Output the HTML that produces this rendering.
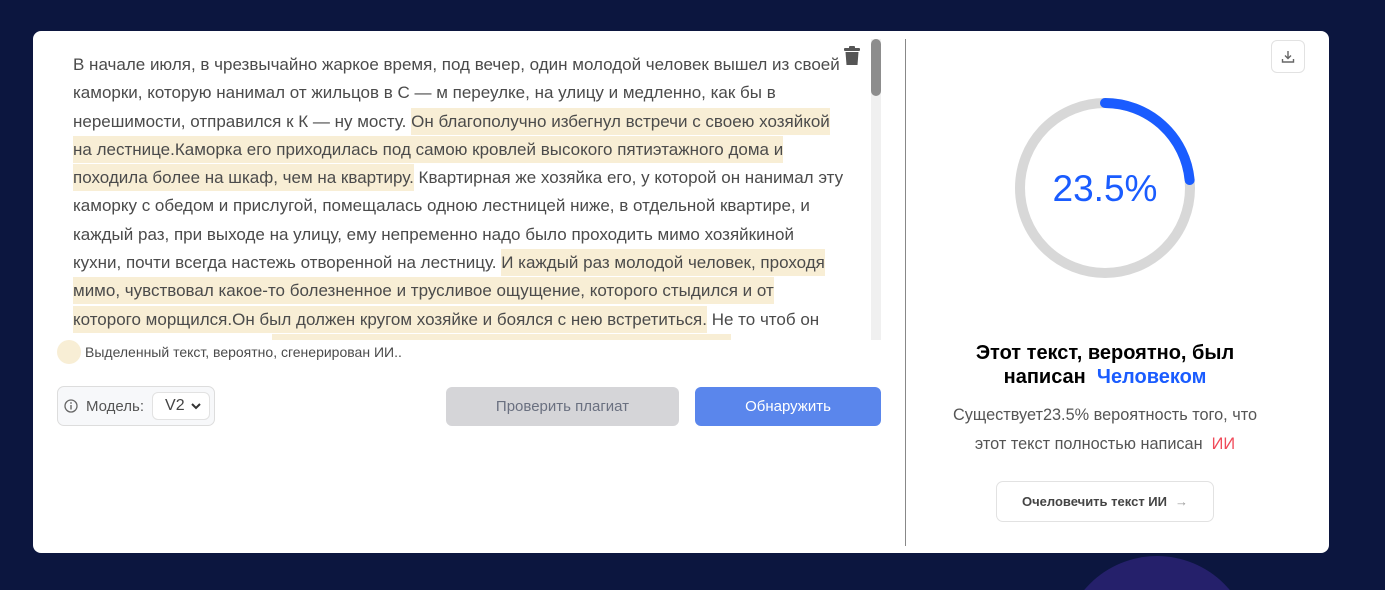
<!DOCTYPE html>
<html><head><meta charset="utf-8"><style>
*{margin:0;padding:0;box-sizing:border-box}
html,body{width:1385px;height:590px;overflow:hidden}
body{background:#0c163f;font-family:"Liberation Sans",sans-serif;position:relative}
.bw{position:absolute;left:1062px;top:556px;width:190px;height:34px;overflow:hidden}
.blob{width:190px;height:190px;border-radius:50%;background:#25206b}
.card{position:absolute;left:33px;top:31px;width:1296px;height:522px;background:#fff;border-radius:8px}
.txt{position:absolute;left:40px;top:20px;width:800px;height:289px;overflow:hidden;font-size:17px;line-height:28.3px;color:#4b4b4b;white-space:nowrap}
.h{background:#f8eed5;padding:4px 0}
.sb{position:absolute;left:838px;top:8px;width:10px;height:301px;background:#f0f0f0}
.sb i{display:block;width:10px;height:57px;background:#8d8d8d;border-radius:5px}
.legend{position:absolute;left:24px;top:309px;font-size:14px;color:#4b4b4b;display:flex;align-items:center}
.legend b{width:24px;height:24px;border-radius:50%;background:#f8eed5;margin-right:4px}
.model{position:absolute;left:24px;top:355px;width:158px;height:40px;border:1px solid #ddd;border-radius:7px;background:#f7f8fa;display:flex;align-items:center;font-size:15px;color:#555}
.sel{margin-left:8px;width:58px;height:28px;border:1px solid #e2e2e2;border-radius:6px;background:#fff;display:flex;align-items:center;justify-content:space-between;padding:0 8px 0 12px;font-size:16px;color:#444}
.btn{position:absolute;top:356px;height:39px;border-radius:6px;display:flex;align-items:center;justify-content:center;font-size:15px}
.div{position:absolute;left:872px;top:8px;width:1px;height:507px;background:#888}
.dl{position:absolute;left:1238px;top:9px;width:34px;height:33px;border:1px solid #e2e2e2;border-radius:6px;display:flex;align-items:center;justify-content:center}
.r{position:absolute;left:873px;width:398px;text-align:center}
</style></head><body>
<div class="bw"><div class="blob"></div></div>
<div class="card">
<div class="txt">В начале июля, в чрезвычайно жаркое время, под вечер, один молодой человек вышел из своей<br>каморки, которую нанимал от жильцов в С — м переулке, на улицу и медленно, как бы в<br>нерешимости, отправился к К — ну мосту. <span class="h">Он благополучно избегнул встречи с своею хозяйкой</span><br><span class="h">на лестнице.Каморка его приходилась под самою кровлей высокого пятиэтажного дома и</span><br><span class="h">походила более на шкаф, чем на квартиру.</span> Квартирная же хозяйка его, у которой он нанимал эту<br>каморку с обедом и прислугой, помещалась одною лестницей ниже, в отдельной квартире, и<br>каждый раз, при выходе на улицу, ему непременно надо было проходить мимо хозяйкиной<br>кухни, почти всегда настежь отворенной на лестницу. <span class="h">И каждый раз молодой человек, проходя</span><br><span class="h">мимо, чувствовал какое-то болезненное и трусливое ощущение, которого стыдился и от</span><br><span class="h">которого морщился.Он был должен кругом хозяйке и боялся с нею встретиться.</span> Не то чтоб он<br>был так труслив и забит, <span class="h">совсем даже напротив; но с некоторого времени он был в</span></div>
<svg style="position:absolute;left:810px;top:15px" width="18" height="20" viewBox="0 0 18 20"><rect x="1" y="2" width="16" height="3" rx="1" fill="#555"/><rect x="6" y="0" width="6" height="3" rx="1" fill="#555"/><path d="M2.5 6h13l-1 13h-11z" fill="#555"/></svg>
<div class="sb"><i></i></div>
<div class="legend"><b></b>Выделенный текст, вероятно, сгенерирован ИИ..</div>
<div class="model"><svg style="margin:0 8px 0 6px" width="14" height="14" viewBox="0 0 14 14"><circle cx="7" cy="7" r="6" fill="none" stroke="#666" stroke-width="1.3"/><rect x="6.3" y="6" width="1.4" height="4.5" fill="#666"/><circle cx="7" cy="4" r=".9" fill="#666"/></svg>Модель:<div class="sel">V2<svg width="10" height="7" viewBox="0 0 10 7"><path d="M1 1l4 4 4-4" fill="none" stroke="#333" stroke-width="2"/></svg></div></div>
<div class="btn" style="left:413px;width:233px;background:#d5d5d8;color:#6a7080">Проверить плагиат</div>
<div class="btn" style="left:662px;width:186px;background:#5a86ec;color:#fff">Обнаружить</div>
<div class="div"></div>
<div class="dl"><svg width="14" height="14" viewBox="0 0 14 14" fill="none" stroke="#666" stroke-width="1.4"><path d="M7 1v7M4 5.5l3 3 3-3M1.5 9v3h11V9"/></svg></div>
<svg style="position:absolute;left:977px;top:62px" width="190" height="190" viewBox="0 0 190 190"><circle cx="95" cy="95" r="85" fill="none" stroke="#d8d8d8" stroke-width="10"/><circle cx="95" cy="95" r="85" fill="none" stroke="#1a5cff" stroke-width="10" stroke-linecap="round" stroke-dasharray="125.5 500" transform="rotate(-90 95 95)"/><text x="95" y="108" text-anchor="middle" font-family="Liberation Sans" font-size="37" fill="#1a5cff">23.5%</text></svg>
<div class="r" style="top:310px;font-size:20px;font-weight:bold;line-height:24px;color:#000">Этот текст, вероятно, был<br>написан <span style="color:#1a5cff">&nbsp;Человеком</span></div>
<div class="r" style="top:370px;font-size:16.3px;line-height:29px;color:#555">Существует23.5% вероятность того, что<br>этот текст полностью написан <span style="color:#f04b5a">&nbsp;ИИ</span></div>
<div style="position:absolute;left:963px;top:450px;width:218px;height:41px;border:1px solid #e2e2e2;border-radius:7px;display:flex;align-items:center;justify-content:center;font-size:13px;font-weight:bold;color:#444">Очеловечить текст ИИ <span style="color:#999;margin-left:8px;font-weight:normal">→</span></div>
</div>
</body></html>
